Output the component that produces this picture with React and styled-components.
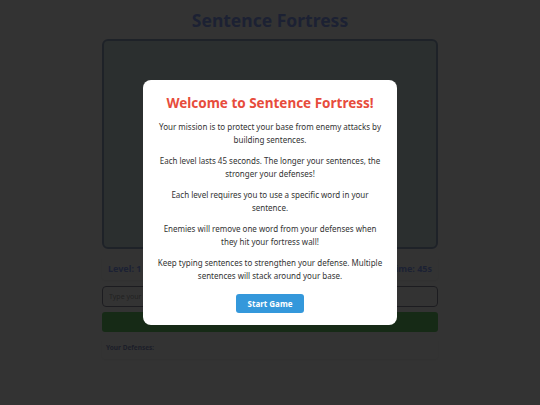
import React from "react";
import styled, { createGlobalStyle } from "styled-components";

const GlobalStyle = createGlobalStyle`
  * { box-sizing: border-box; }
  body {
    margin: 0;
    font-family: "Comic Sans MS", "Noto Sans", sans-serif;
    background: #ffffff;
  }
`;

const Page = styled.div`
  min-height: 405px;
  background: #ffffff;
  padding-top: 9px;
`;

const Container = styled.div`
  width: 336px;
  margin: 0 auto;
`;

const Title = styled.h1`
  margin: 0 0 7px;
  text-align: center;
  font-size: 17.5px;
  line-height: 23px;
  font-weight: 700;
  color: #8ca5ff;
`;

const GameArea = styled.div`
  height: 210px;
  background: #d7ebeb;
  border: 2px solid #96aac8;
  border-radius: 6px;
`;

const StatsBar = styled.div`
  margin-top: 7px;
  height: 24px;
  padding: 0 6px;
  display: flex;
  align-items: center;
  justify-content: space-between;
  background: #ffffff;
  border-radius: 4px;
  box-shadow: 0 1px 3px rgba(0, 0, 0, 0.08);
  font-size: 9px;
  font-weight: 700;
  color: #8ca5ff;
`;

const Input = styled.input`
  display: block;
  width: 100%;
  margin-top: 6px;
  height: 21px;
  padding: 0 6px;
  border: 1px solid #8c8ca0;
  border-radius: 4px;
  font-family: inherit;
  font-size: 7px;
  background: #ffffff;
  &::placeholder { color: #aaaaaa; }
`;

const BuildButton = styled.button`
  display: block;
  width: 100%;
  margin-top: 5px;
  height: 20px;
  border: none;
  border-radius: 3px;
  background: #6ed26e;
  color: #ffffff;
  font-family: inherit;
  font-weight: 700;
  font-size: 8px;
`;

const Defenses = styled.div`
  margin-top: 6px;
  height: 21px;
  padding: 5px 4px;
  background: #ffffff;
  border-radius: 4px;
  box-shadow: 0 1px 3px rgba(0, 0, 0, 0.08);
  font-size: 6.5px;
  font-weight: 700;
  color: #8c96c8;
`;

const Overlay = styled.div`
  position: fixed;
  inset: 0;
  background: rgba(0, 0, 0, 0.8);
  display: flex;
  align-items: center;
  justify-content: center;
`;

const Modal = styled.div`
  width: 254px;
  padding: 13px 14px 12px;
  background: #ffffff;
  border-radius: 8px;
  text-align: center;
`;

const ModalTitle = styled.h2`
  margin: 0 0 7px;
  font-size: 13.5px;
  line-height: 20px;
  font-weight: 700;
  white-space: nowrap;
  color: #e74c3c;
`;

const Para = styled.p`
  margin: 0 0 8px;
  font-size: 8px;
  line-height: 13px;
  color: #333333;
`;

const StartButton = styled.button`
  margin-top: 2px;
  height: 19px;
  padding: 0 12px;
  border: none;
  border-radius: 3px;
  background: #3498db;
  color: #ffffff;
  font-family: inherit;
  font-weight: 700;
  font-size: 8px;
`;

export default function App() {
  return (
    <>
      <GlobalStyle />
      <Page>
        <Container>
          <Title>Sentence Fortress</Title>
          <GameArea />
          <StatsBar>
            <span>Level: 1</span>
            <span>Time: 45s</span>
          </StatsBar>
          <Input placeholder="Type your sentence here..." />
          <BuildButton />
          <Defenses>Your Defenses:</Defenses>
        </Container>
      </Page>
      <Overlay>
        <Modal>
          <ModalTitle>Welcome to Sentence Fortress!</ModalTitle>
          <Para>Your mission is to protect your base from enemy attacks by building sentences.</Para>
          <Para>Each level lasts 45 seconds. The longer your sentences, the stronger your defenses!</Para>
          <Para>Each level requires you to use a specific word in your sentence.</Para>
          <Para>Enemies will remove one word from your defenses when they hit your fortress wall!</Para>
          <Para>Keep typing sentences to strengthen your defense. Multiple sentences will stack around your base.</Para>
          <StartButton>Start Game</StartButton>
        </Modal>
      </Overlay>
    </>
  );
}
